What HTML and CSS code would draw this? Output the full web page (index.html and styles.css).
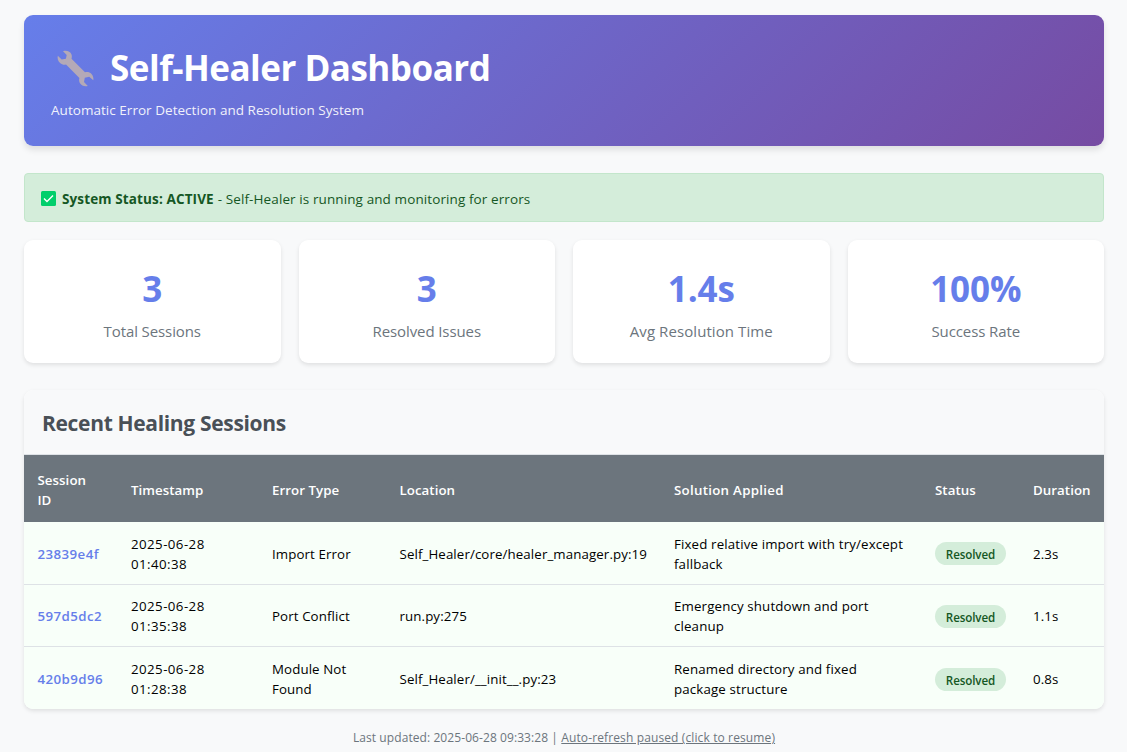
FILE: index.html
```
<!DOCTYPE html>
<html lang="en">
<head>
<meta charset="utf-8">
<title>Self-Healer Dashboard</title>
<link rel="stylesheet" href="styles.css">
</head>
<body>
<div class="container">
  <header class="header">
    <h1 class="title">
      <svg class="wrench" viewBox="0 0 37 37" aria-hidden="true"><path d="M6 1.200C9.500 .2 13.300 1.300 14.500 4.500C15 6 14.900 7.400 14.500 8.800L28 22.200C30.300 21.500 32.700 22 34.500 23.900C36 25.500 36.800 28 36.300 30.300L32.200 26.700L27.800 27.800L27 32L30.800 35.900C27.800 36.700 24.500 35.700 23 33.200C22 31.500 21.900 29.600 22.400 28L9 14.500C7 15.100 4.800 14.500 3.100 12.900C1 11 .2 8.400 .8 5.700L4.700 9.500L8.900 8.700L9.700 4.900Z"/></svg>
      <span>Self-Healer Dashboard</span>
    </h1>
    <p class="subtitle">Automatic Error Detection and Resolution System</p>
  </header>

  <div class="status">
    <svg class="check" viewBox="0 0 15 15" aria-hidden="true"><rect width="15" height="15" rx="1.500"/><path d="M3 7.600L6 10.600L12 4.600"/></svg>
    <strong class="status-name">System Status: ACTIVE</strong>
    <span class="status-text">- Self-Healer is running and monitoring for errors</span>
  </div>

  <section class="stats">
    <div class="card"><div class="number">3</div><div class="label">Total Sessions</div></div>
    <div class="card"><div class="number">3</div><div class="label">Resolved Issues</div></div>
    <div class="card"><div class="number">1.4s</div><div class="label label-wide">Avg Resolution Time</div></div>
    <div class="card"><div class="number">100%</div><div class="label">Success Rate</div></div>
  </section>

  <section class="sessions">
    <h2 class="sessions-title">Recent Healing Sessions</h2>
    <table class="table">
      <colgroup><col class="c-id"><col class="c-time"><col class="c-type"><col class="c-loc"><col class="c-fix"><col class="c-status"><col class="c-dur"></colgroup>
      <thead>
        <tr><th>Session<br>ID</th><th>Timestamp</th><th>Error Type</th><th>Location</th><th class="wide">Solution Applied</th><th>Status</th><th>Duration</th></tr>
      </thead>
      <tbody>
        <tr><td class="id">23839e4f</td><td class="time">2025-06-28<br>01:40:38</td><td>Import Error</td><td>Self_Healer/core/healer_manager.py:19</td><td class="fix">Fixed relative import with try/except<br>fallback</td><td><span class="badge">Resolved</span></td><td>2.3s</td></tr>
        <tr><td class="id">597d5dc2</td><td class="time">2025-06-28<br>01:35:38</td><td>Port Conflict</td><td>run.py:275</td><td class="fix">Emergency shutdown and port<br>cleanup</td><td><span class="badge">Resolved</span></td><td>1.1s</td></tr>
        <tr><td class="id">420b9d96</td><td class="time">2025-06-28<br>01:28:38</td><td>Module Not<br>Found</td><td>Self_Healer/__init__.py:23</td><td class="fix">Renamed directory and fixed<br>package structure</td><td><span class="badge">Resolved</span></td><td>0.8s</td></tr>
      </tbody>
    </table>
  </section>

  <footer class="footer"><span class="updated">Last updated: 2025-06-28 09:33:28 |</span> <span class="refresh">Auto-refresh paused (click to resume)</span></footer>
</div>
</body>
</html>
```
FILE: styles.css
```
* { box-sizing: border-box; }
body { margin: 0; background: #f8f9fa; font-family: "Open Sans", "Noto Sans", sans-serif; overflow: hidden; }
.container { width: 1080px; margin: 15px 0 0 24px; }

.header { height: 131px; padding: 26px 27px; border-radius: 9px; color: #fff; background: linear-gradient(135deg, #667eea 0%, #764ba2 100%); box-shadow: 0 4px 6px rgba(0, 0, 0, .1); }
.title { display: flex; align-items: center; margin: 0; height: 54px; font-size: 35px; line-height: 52px; font-weight: 700; letter-spacing: -.5px; white-space: nowrap; }
.title span { margin-left: 16px; }
.wrench { width: 37px; height: 37px; margin-left: 6px; fill: #b4a9b7; }
.subtitle { margin: 5px 0 0; font-size: 13.5px; line-height: 20px; letter-spacing: .035px; opacity: .9; }

.status { display: flex; align-items: center; height: 49px; margin-top: 27px; padding: 3px 16px 0; border: 1px solid #c3e6cb; border-radius: 4px; background: #d4edda; color: #155724; font-size: 13.5px; white-space: nowrap; }
.check { width: 15px; height: 15px; margin: -1px 6px 0 0; fill: #00cf6b; }
.check path { fill: none; stroke: #fff; stroke-width: 1.400; }
.status-name { letter-spacing: .12px; margin-right: 4px; }
.status-text { letter-spacing: .1px; }

.stats { display: grid; grid-template-columns: repeat(4, 1fr); gap: 18px; margin-top: 18px; }
.card { height: 123px; padding-top: 22px; border-radius: 9px; background: #fff; text-align: center; box-shadow: 0 2px 4px rgba(0, 0, 0, .1); }
.number { font-size: 35px; line-height: 54px; font-weight: 700; color: #667eea; letter-spacing: -.1px; }
.label { margin-top: 3px; font-size: 15px; line-height: 24px; color: #6c757d; letter-spacing: -.1px; }
.label-wide { letter-spacing: .08px; }

.sessions { margin-top: 27px; border-radius: 9px; overflow: hidden; background: #fff; box-shadow: 0 2px 4px rgba(0, 0, 0, .1); }
.sessions-title { height: 65px; margin: 0; padding: 1px 18px 0; border-bottom: 1px solid #dee2e6; background: #f8f9fa; color: #495057; font-size: 21px; line-height: 64px; font-weight: 700; letter-spacing: -.33px; }
.table { width: 1080px; table-layout: fixed; border-collapse: separate; border-spacing: 0; font-size: 13.3px; line-height: 20px; letter-spacing: .1px; white-space: nowrap; color: #000; }
.c-id { width: 93.500px; }
.c-time { width: 141px; }
.c-type { width: 127.500px; }
.c-loc { width: 274.500px; }
.c-fix { width: 261px; }
.c-status { width: 98px; }
.c-dur { width: 84.500px; }
.table th { height: 67px; padding: 3px 13.5px 0; background: #6c757d; color: #fff; font-weight: 600; text-align: left; letter-spacing: .05px; }
.table th.wide { letter-spacing: .28px; }
.table td { height: 62.500px; padding: 2px 13.5px 0; border-bottom: 1px solid #dee2e6; background: #f8fff9; vertical-align: middle; }
.table tr:last-child td { height: 62px; border-bottom: 0; }
.table .id { font-weight: 600; color: #667eea; letter-spacing: .42px; }
.table .time { letter-spacing: .43px; }
.table .fix { letter-spacing: .14px; }
.badge { display: block; width: 71px; height: 23px; border-radius: 12px; background: #d4edda; color: #155724; font-size: 11.6px; line-height: 25px; font-weight: 600; letter-spacing: -.1px; text-align: center; }

.footer { margin-top: 19px; text-align: center; color: #6c757d; font-size: 12px; line-height: 20px; letter-spacing: .12px; white-space: nowrap; }
.updated { letter-spacing: .08px; }
.refresh { text-decoration: underline; }
```
